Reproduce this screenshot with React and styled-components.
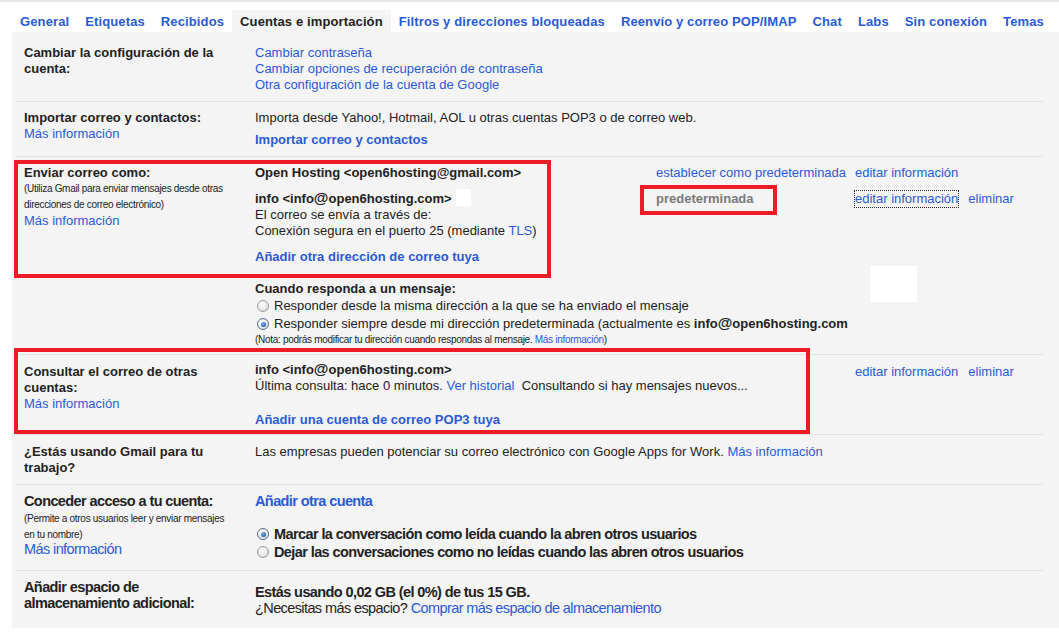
import React from "react";
import styled, { createGlobalStyle, css } from "styled-components";

const GlobalStyle = createGlobalStyle`
  body {
    margin: 0;
    background: #fff;
    font-family: "Liberation Sans", Arial, sans-serif;
    font-size: 13px;
    color: #222;
  }
`;

const LINK = "#2a5bd7";
const PANEL = "#f4f4f4";
const RED = "#ed1c24";

const Page = styled.div`
  border-top: 2px solid #e8e8e8;
  width: 1059px;
`;

const TabBar = styled.div`
  display: flex;
  padding: 8px 0 0 12px;
`;

const Tab = styled.div`
  height: 22px;
  line-height: 23px;
  padding: 0 8px;
  font-weight: bold;
  letter-spacing: 0.12px;
  white-space: nowrap;
  color: ${(p) => (p.$active ? "#222" : LINK)};
  background: ${(p) => (p.$active ? PANEL : "transparent")};
`;

const Panel = styled.div`
  margin-left: 12px;
  background: ${PANEL};
  padding: 5px 16px 12px 4px;
`;

const Row = styled.div`
  position: relative;
  display: grid;
  grid-template-columns: 231px 1fr;
  padding: ${(p) => p.$pad || "8px 0 8px 8px"};
  border-bottom: ${(p) => (p.$last ? "none" : "1px solid #e2e2e2")};
  line-height: 16px;
  ${(p) =>
    p.$narrow &&
    css`
      font-size: 14.5px;
      letter-spacing: -0.6px;
    `}
`;

const Label = styled.div`
  max-width: 205px;
`;

const Title = styled.div`
  font-weight: bold;
  margin-top: ${(p) => p.$mt || 0}px;
  line-height: ${(p) => p.$lh || 16}px;
`;

const Note = styled.div`
  font-size: 10px;
  line-height: ${(p) => p.$lh || 16}px;
  letter-spacing: -0.3px;
`;

const Link = styled.a`
  color: ${LINK};
  text-decoration: none;
  cursor: pointer;
  font-weight: ${(p) => (p.$bold ? "bold" : "normal")};
  ${(p) =>
    p.$focus &&
    css`
      outline: 1px dotted #222;
    `}
`;

const LinkLine = styled.div`
  margin-top: ${(p) => p.$mt || 0}px;
  line-height: ${(p) => p.$lh || 16}px;
`;

const Content = styled.div`
  display: flex;
  flex-direction: column;
  margin-top: ${(p) => p.$mt || 0}px;
`;

const AccountRow = styled.div`
  display: grid;
  grid-template-columns: 401px 199px auto;
  margin-top: ${(p) => p.$mt || 0}px;
`;

const Address = styled.div`
  font-weight: bold;
  white-space: nowrap;
  height: 16px;
`;

const At = styled.span`
  font-size: 15px;
  line-height: 14px;
`;

const Blank = styled.span`
  display: inline-block;
  width: 15px;
  height: 17px;
  background: #fff;
  vertical-align: text-top;
  margin: -2px 0 0 4px;
`;

const Status = styled.div`
  white-space: nowrap;
`;

const DefaultTag = styled.span`
  position: relative;
  font-weight: bold;
  color: #7a7a7a;

  &::after {
    content: "";
    position: absolute;
    inset: -6px -23px -9px -16px;
    border: 4px solid ${RED};
  }
`;

const Actions = styled.div`
  display: flex;
  gap: 10px;
  align-items: flex-start;
  white-space: nowrap;
  margin-top: ${(p) => p.$mt || 0}px;
`;

const Plain = styled.div`
  white-space: nowrap;
`;

const Annotation = styled.div`
  position: absolute;
  border: 4px solid ${RED};
  pointer-events: none;
`;

const WhitePatch = styled.div`
  position: absolute;
  background: #fff;
`;

const RadioList = styled.div`
  display: flex;
  flex-direction: column;
  margin-top: ${(p) => p.$mt || 0}px;
`;

const RadioItem = styled.label`
  display: flex;
  align-items: center;
  gap: 5px;
  height: 18px;
  padding-left: 2px;
  font-weight: ${(p) => (p.$bold ? "bold" : "normal")};
  white-space: nowrap;
`;

const Radio = styled.span`
  position: relative;
  flex: none;
  width: 10px;
  height: 10px;
  border-radius: 50%;
  border: 1px solid #9a9a9a;
  background: radial-gradient(circle at 40% 35%, #fff 0%, #e6e6e6 60%, #cfcfcf 100%);

  ${(p) =>
    p.$checked &&
    css`
      border-color: #55708c;
      &::after {
        content: "";
        position: absolute;
        left: 2.5px;
        top: 2.5px;
        width: 5px;
        height: 5px;
        border-radius: 50%;
        background: radial-gradient(circle at 40% 35%, #7fb8ef 0%, #1f5fa8 70%, #173f70 100%);
      }
    `}
`;

const tabs = [
  "General",
  "Etiquetas",
  "Recibidos",
  "Cuentas e importación",
  "Filtros y direcciones bloqueadas",
  "Reenvío y correo POP/IMAP",
  "Chat",
  "Labs",
  "Sin conexión",
  "Temas",
];

const InfoAddress = ({ children }) => (
  <Address>
    info &lt;info<At>@</At>open6hosting.com&gt;
    {children}
  </Address>
);

export default function App() {
  return (
    <Page>
      <GlobalStyle />
      <TabBar>
        {tabs.map((t) => (
          <Tab key={t} $active={t === "Cuentas e importación"}>
            {t}
          </Tab>
        ))}
      </TabBar>
      <Panel>
        <Row>
          <Label>
            <Title>Cambiar la configuración de la cuenta:</Title>
          </Label>
          <Content>
            <Link>Cambiar contraseña</Link>
            <Link>Cambiar opciones de recuperación de contraseña</Link>
            <Link>Otra configuración de la cuenta de Google</Link>
          </Content>
        </Row>

        <Row>
          <Label>
            <Title>Importar correo y contactos:</Title>
            <Link>Más información</Link>
          </Label>
          <Content>
            <Plain>Importa desde Yahoo!, Hotmail, AOL u otras cuentas POP3 o de correo web.</Plain>
            <LinkLine $mt={6}>
              <Link $bold>Importar correo y contactos</Link>
            </LinkLine>
          </Content>
        </Row>

        <Row $pad="8px 0 7px 8px">
          <Annotation style={{ left: -2, top: 3, width: 529, height: 110 }} />
          <WhitePatch style={{ left: 854, top: 109, width: 47, height: 36 }} />
          <Label>
            <Title>Enviar correo como:</Title>
            <Note>(Utiliza Gmail para enviar mensajes desde otras direcciones de correo electrónico)</Note>
            <Link>Más información</Link>
          </Label>
          <Content>
            <AccountRow>
              <Address>Open Hosting &lt;open6hosting@gmail.com&gt;</Address>
              <Status>
                <Link>establecer como predeterminada</Link>
              </Status>
              <Actions>
                <Link>editar información</Link>
              </Actions>
            </AccountRow>
            <AccountRow $mt={10}>
              <div>
                <InfoAddress>
                  <Blank />
                </InfoAddress>
                <Plain>El correo se envía a través de:</Plain>
                <Plain>
                  Conexión segura en el puerto 25 (mediante <Link>TLS</Link>)
                </Plain>
              </div>
              <Status>
                <DefaultTag>predeterminada</DefaultTag>
              </Status>
              <Actions>
                <Link $focus>editar información</Link>
                <Link>eliminar</Link>
              </Actions>
            </AccountRow>
            <LinkLine $mt={10}>
              <Link $bold>Añadir otra dirección de correo tuya</Link>
            </LinkLine>
            <Title $mt={16}>Cuando responda a un mensaje:</Title>
            <RadioList>
              <RadioItem>
                <Radio />
                Responder desde la misma dirección a la que se ha enviado el mensaje
              </RadioItem>
              <RadioItem>
                <Radio $checked />
                <span>
                  Responder siempre desde mi dirección predeterminada (actualmente es{" "}
                  <b>
                    info<At>@</At>open6hosting.com
                  </b>
                </span>
              </RadioItem>
            </RadioList>
            <Note $lh={14}>
              (Nota: podrás modificar tu dirección cuando respondas al mensaje. <Link>Más información</Link>)
            </Note>
          </Content>
        </Row>

        <Row $pad="9px 0 6px 8px">
          <Annotation style={{ left: -2, top: -7, width: 788, height: 78 }} />
          <Label>
            <Title>Consultar el correo de otras cuentas:</Title>
            <Link>Más información</Link>
          </Label>
          <Content $mt={-2}>
            <AccountRow>
              <div>
                <InfoAddress />
                <Plain>
                  Última consulta: hace 0 minutos. <Link>Ver historial</Link>&nbsp;&nbsp;Consultando si hay
                  mensajes nuevos...
                </Plain>
              </div>
              <Status />
              <Actions $mt={2}>
                <Link>editar información</Link>
                <Link>eliminar</Link>
              </Actions>
            </AccountRow>
            <LinkLine $mt={18}>
              <Link $bold>Añadir una cuenta de correo POP3 tuya</Link>
            </LinkLine>
          </Content>
        </Row>

        <Row $pad="9px 0 8px 8px">
          <Label>
            <Title>¿Estás usando Gmail para tu trabajo?</Title>
          </Label>
          <Content>
            <Plain>
              Las empresas pueden potenciar su correo electrónico con Google Apps for Work.{" "}
              <Link>Más información</Link>
            </Plain>
          </Content>
        </Row>

        <Row $narrow $pad="6px 0 9px 8px">
          <Label>
            <Title $lh={20}>Conceder acceso a tu cuenta:</Title>
            <Note>(Permite a otros usuarios leer y enviar mensajes en tu nombre)</Note>
            <LinkLine $lh={12}>
              <Link>Más información</Link>
            </LinkLine>
          </Label>
          <Content>
            <LinkLine $lh={20}>
              <Link $bold>Añadir otra cuenta</Link>
            </LinkLine>
            <RadioList $mt={14}>
              <RadioItem $bold>
                <Radio $checked />
                Marcar la conversación como leída cuando la abren otros usuarios
              </RadioItem>
              <RadioItem $bold>
                <Radio />
                Dejar las conversaciones como no leídas cuando las abren otros usuarios
              </RadioItem>
            </RadioList>
          </Content>
        </Row>

        <Row $narrow $last $pad="8px 0 0 8px">
          <Label>
            <Title>Añadir espacio de almacenamiento adicional:</Title>
          </Label>
          <Content>
            <Title $mt={5}>Estás usando 0,02 GB (el 0%) de tus 15 GB.</Title>
            <Plain>
              ¿Necesitas más espacio? <Link>Comprar más espacio de almacenamiento</Link>
            </Plain>
          </Content>
        </Row>
      </Panel>
    </Page>
  );
}
